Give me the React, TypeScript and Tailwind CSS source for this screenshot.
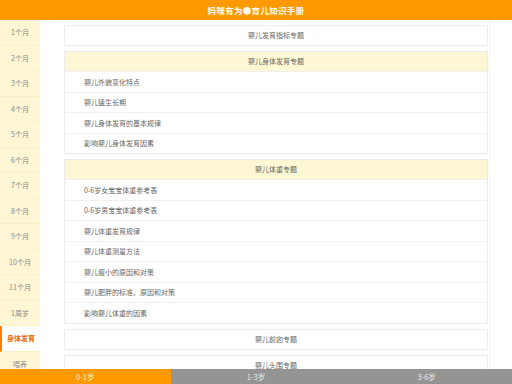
import React from "react";

const months = ["1个月","2个月","3个月","4个月","5个月","6个月","7个月","8个月","9个月","10个月","11个月","1周岁","身体发育","喂养"];

function Card({ title, rows, yellow }: { title: string; rows?: string[]; yellow?: boolean }) {
  return (
    <div className="border border-[#ececec] bg-white">
      <div className={`h-[19px] flex items-center justify-center text-[7px] text-[#666] ${yellow ? "bg-[#fef7d3]" : "bg-white"}`}>
        {title}
      </div>
      {rows?.map((r) => (
        <div key={r} className="h-[20.5px] border-t border-[#f0f0f0] flex items-center pl-[19px] text-[7px] text-[#666]">
          {r}
        </div>
      ))}
    </div>
  );
}

export default function App() {
  return (
    <div className="w-[512px] h-[384px] flex flex-col overflow-hidden bg-white" style={{ fontFamily: '"Noto Sans CJK SC", "Noto Sans", sans-serif' }}>
      <div className="h-[20px] shrink-0 bg-[#ff9900] flex items-center justify-center text-white text-[8.5px] font-bold tracking-[0.3px]">
        妈咪有为●育儿知识手册
      </div>
      <div className="flex-1 flex overflow-hidden">
        <div className="w-[40px] shrink-0 bg-[#fef6d4] flex flex-col">
          {months.map((m) => {
            const active = m === "身体发育";
            return (
              <div
                key={m}
                className={`h-[25.5px] shrink-0 flex items-center justify-center text-[7px] border-b border-[#fbf0c4] ${active ? "bg-white border-l-2 border-l-[#ff7f00] text-[#e86a00] font-bold" : "text-[#8a8a8a]"}`}
              >
                {m}
              </div>
            );
          })}
        </div>
        <div className="flex-1 flex overflow-hidden">
          <div className="w-[450px] pl-[24px] pr-[1px] pt-[5px] flex flex-col gap-[5px] border-r border-[#f2f2f2]">
            <Card title="婴儿发育指标专题" />
            <Card title="婴儿身体发育专题" yellow rows={["婴儿外貌变化特点","婴儿猛生长期","婴儿身体发育的基本规律","影响婴儿身体发育因素"]} />
            <Card title="婴儿体重专题" yellow rows={["0-6岁女宝宝体重参考表","0-6岁男宝宝体重参考表","婴儿体重发育规律","婴儿体重测量方法","婴儿瘦小的原因和对策","婴儿肥胖的标准、原因和对策","影响婴儿体重的因素"]} />
            <Card title="婴儿前囟专题" />
            <Card title="婴儿头围专题" />
          </div>
        </div>
      </div>
      <div className="h-[15px] shrink-0 grid grid-cols-3 text-[7.5px]">
        <div className="bg-[#ff9900] text-[#fff3c8] flex items-center justify-center">0-1岁</div>
        <div className="bg-[#949494] text-[#eeeeee] flex items-center justify-center">1-3岁</div>
        <div className="bg-[#949494] text-[#eeeeee] flex items-center justify-center">3-6岁</div>
      </div>
    </div>
  );
}
